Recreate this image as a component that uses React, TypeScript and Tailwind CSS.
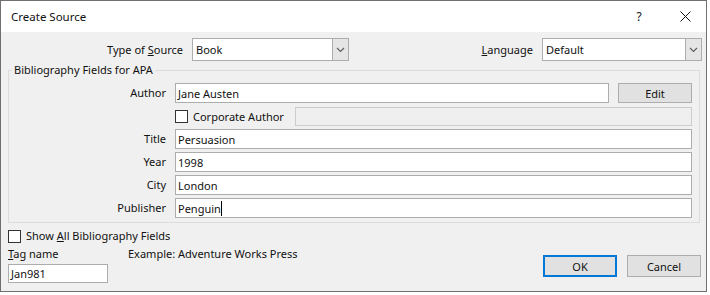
import React from 'react';

const font = { fontFamily: '"Noto Sans", "Segoe UI", Arial, sans-serif' };

const Chevron: React.FC = () => (
  <svg width="9" height="6" viewBox="0 0 9 6">
    <path d="M1 1l3.5 3.5L8 1" fill="none" stroke="#606060" strokeWidth="1.2" />
  </svg>
);

const Select: React.FC<{ value: string; width: string }> = ({ value, width }) => (
  <div className={`${width} h-[23px] bg-white border border-[#adadad] flex items-center`}>
    <span className="flex-1 pl-[3px] leading-none">{value}</span>
    <div className="w-[16px] h-full bg-[#e5e5e5] border-l border-[#adadad] flex items-center justify-center">
      <Chevron />
    </div>
  </div>
);

const Checkbox: React.FC = () => (
  <div className="w-[13px] h-[13px] bg-white border border-[#333333] shrink-0" />
);

interface FieldProps {
  label: string;
  value: string;
  caret?: boolean;
}

const Field: React.FC<FieldProps> = ({ label, value, caret }) => (
  <div className="flex items-center h-[20px] mt-[3px]">
    <span className="w-[157px] text-right">{label}</span>
    <div className="ml-[9px] w-[517px] h-[20px] bg-white border border-[#adadad] flex items-center pl-[2px]">
      <span className="leading-none">{value}</span>
      {caret && <span className="w-[1px] h-[15px] bg-black" />}
    </div>
  </div>
);

const App: React.FC = () => {
  return (
    <div className="w-[710px] h-[295px] bg-white text-[11px] leading-[16px] text-[#111111] whitespace-nowrap" style={font}>
      <div className="w-[707px] h-[292px] border border-[#707070] bg-[#f0f0f0] flex flex-col">
        {/* title bar */}
        <div className="h-[31px] bg-white flex items-center">
          <span className="ml-[10px] flex-1 text-[11.5px]">Create Source</span>
          <span className="w-[10px] text-center text-[12px] mr-[36px]">?</span>
          <svg width="11" height="11" viewBox="0 0 11 11" className="mr-[15px]">
            <path d="M0.5 0.5l10 10M10.5 0.5l-10 10" stroke="#111111" strokeWidth="1" />
          </svg>
        </div>

        {/* source + language */}
        <div className="flex items-center mt-[6px] h-[23px]">
          <span className="w-[182px] text-right">
            Type of <u>S</u>ource
          </span>
          <div className="ml-[9px]">
            <Select value="Book" width="w-[157px]" />
          </div>
          <span className="w-[184px] text-right">
            <u>L</u>anguage
          </span>
          <div className="ml-[9px]">
            <Select value="Default" width="w-[160px]" />
          </div>
        </div>

        {/* bibliography group */}
        <fieldset className="ml-[7px] w-[692px] mt-[1px] border border-[#dcdcdc] pb-[4px]">
          <legend className="ml-[3px] px-[2px] leading-[16px]">Bibliography Fields for APA</legend>
          <div className="pt-[2px]">
            <div className="flex items-center h-[20px] mt-[3px]">
              <span className="w-[157px] text-right">Author</span>
              <div className="ml-[9px] w-[434px] h-[20px] bg-white border border-[#adadad] flex items-center pl-[2px]">
                <span className="leading-none">Jane Austen</span>
              </div>
              <button className="ml-[9px] w-[74px] h-[20px] bg-[#e1e1e1] border border-[#adadad] leading-none">
                Edit
              </button>
            </div>
            <div className="flex items-center h-[19px] mt-[4px]">
              <div className="w-[166px] shrink-0" />
              <Checkbox />
              <span className="ml-[5px] w-[102px]">Corporate Author</span>
              <div className="w-[397px] h-[19px] bg-[#efefef] border border-[#cccccc]" />
            </div>
            <Field label="Title" value="Persuasion" />
            <Field label="Year" value="1998" />
            <Field label="City" value="London" />
            <Field label="Publisher" value="Penguin" caret />
          </div>
        </fieldset>

        {/* bottom */}
        <div className="flex ml-[7px] mt-[6px]">
          <div className="flex-1 flex flex-col">
            <div className="flex items-center h-[14px]">
              <Checkbox />
              <span className="ml-[5px]">
                Show <u>A</u>ll Bibliography Fields
              </span>
            </div>
            <div className="flex items-center h-[16px] mt-[3px]">
              <span className="w-[120px]">
                <u>T</u>ag name
              </span>
              <span>Example: Adventure Works Press</span>
            </div>
            <div className="mt-[2px] w-[100px] h-[19px] bg-white border border-[#adadad] flex items-center pl-[2px]">
              <span className="leading-none">Jan981</span>
            </div>
          </div>
          <div className="flex pt-[26px] pr-[5px] gap-[10px]">
            <button className="w-[74px] h-[22px] bg-[#e1e1e1] border-2 border-[#0078d7] leading-none">OK</button>
            <button className="w-[74px] h-[22px] bg-[#e1e1e1] border border-[#adadad] leading-none">Cancel</button>
          </div>
        </div>
      </div>
    </div>
  );
};

export default App;
